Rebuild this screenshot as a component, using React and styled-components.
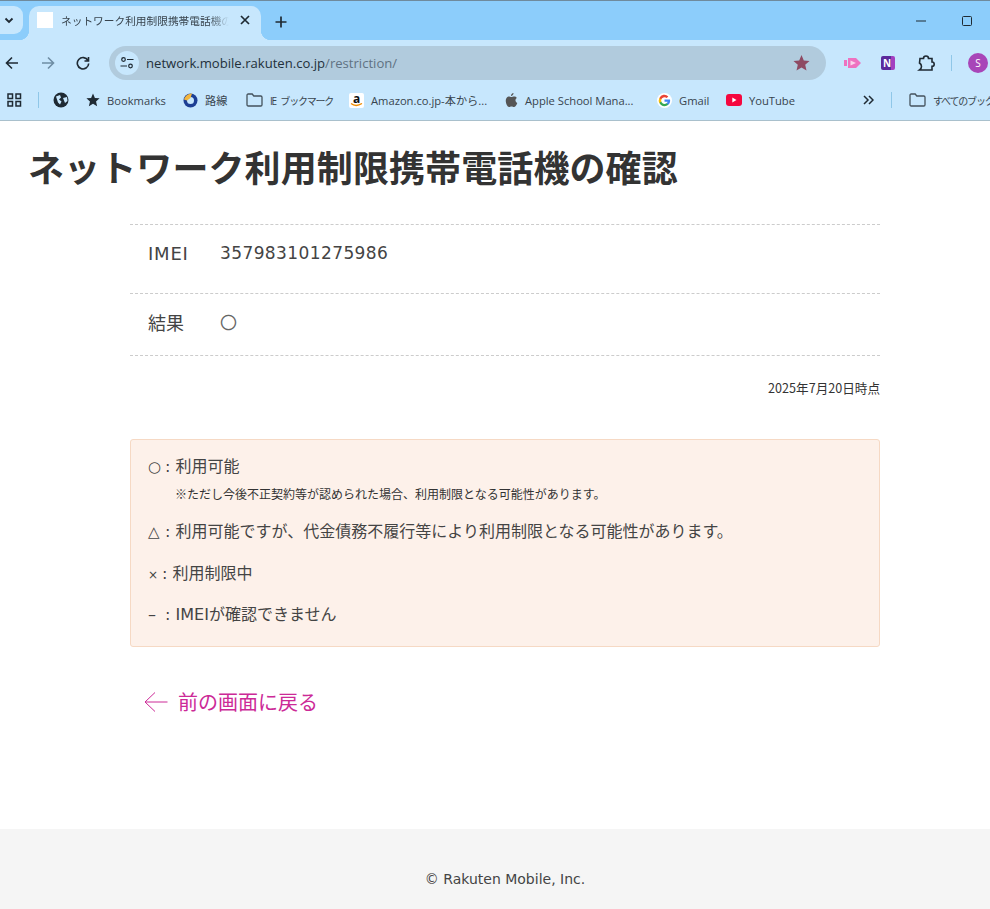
import { createGlobalStyle, styled } from 'styled-components';

const Global = createGlobalStyle`
    html, body {
        margin: 0;
        padding: 0;
        background: #fff;
    }
    body {
        font-family: "DejaVu Sans", "Noto Sans CJK JP", sans-serif;
        color: #333;
    }
`;

const Bookmark = ({ icon, label, $left, $width, $narrow }) => (
    <BookmarkItem $left={$left}>
        {icon}
        <BookmarkLabel $width={$width} $narrow={$narrow}>{label}</BookmarkLabel>
    </BookmarkItem>
);

const FolderIcon = () => (
    <svg width="17" height="14" viewBox="0 0 17 14" fill="none" stroke="#44525c" strokeWidth="1.3">
        <path d="M1 2.2C1 1.5 1.5 1 2.2 1h4l1.6 2h7c.7 0 1.2.5 1.2 1.2v7.6c0 .7-.5 1.2-1.2 1.2H2.200C1.500 13 1 12.500 1 11.800z" />
    </svg>
);

const App = () => {
    return (
        <Page>
            <Global />
            <Browser>
                <TabStrip>
                    <TabMenu>
                        <svg width="10" height="7" viewBox="0 0 10 7" fill="none" stroke="#1f2a33" strokeWidth="1.8">
                            <path d="M1.500 1.500 5 5l3.500-3.500" />
                        </svg>
                    </TabMenu>
                    <Tab>
                        <Favicon />
                        <TabTitle>ネットワーク利用制限携帯電話機の確認</TabTitle>
                        <svg width="10" height="10" viewBox="0 0 10 10" stroke="#1f2a33" strokeWidth="1.700">
                            <path d="M1 1l8 8M9 1 1 9" />
                        </svg>
                    </Tab>
                    <NewTab>
                        <svg width="12" height="12" viewBox="0 0 12 12" stroke="#1f2a33" strokeWidth="1.700">
                            <path d="M6 .5v11M.5 6h11" />
                        </svg>
                    </NewTab>
                    <WindowControls>
                        <svg width="10" height="2" viewBox="0 0 10 2" stroke="#1f2a33">
                            <path d="M0 1h10" />
                        </svg>
                        <svg width="10" height="10" viewBox="0 0 10 10" fill="none" stroke="#1f2a33">
                            <rect x=".5" y=".5" width="9" height="9" rx="1" />
                        </svg>
                    </WindowControls>
                </TabStrip>

                <Toolbar>
                    <NavIcons>
                        <svg width="14" height="14" viewBox="0 0 14 14" fill="none" stroke="#1f2a33" strokeWidth="1.600">
                            <path d="M13 7H1.500M7 1.500 1.500 7 7 12.500" />
                        </svg>
                        <svg width="14" height="14" viewBox="0 0 14 14" fill="none" stroke="#6f8ea4" strokeWidth="1.600">
                            <path d="M1 7h11.500M7 1.500 12.500 7 7 12.500" />
                        </svg>
                        <svg width="14" height="14" viewBox="0 0 14 14" fill="none" stroke="#1f2a33" strokeWidth="1.600">
                            <path d="M12 4.500A5.700 5.700 0 1 0 12.700 7.500M12.500 1v4h-4" />
                        </svg>
                    </NavIcons>
                    <Omnibox>
                        <SiteBadge>
                            <svg width="14" height="12" viewBox="0 0 14 12" fill="none" stroke="#1f2a33" strokeWidth="1.200">
                                <circle cx="3.500" cy="2.500" r="1.800" />
                                <path d="M7 2.500h6.500M.5 9h6.500" />
                                <circle cx="10.500" cy="9" r="1.800" />
                            </svg>
                        </SiteBadge>
                        <Url>
                            network.mobile.rakuten.co.jp<UrlPath>/restriction/</UrlPath>
                        </Url>
                        <svg width="17" height="16" viewBox="0 0 17 16" fill="#8e4a63">
                            <path d="M8.500 0l2.300 5.500 5.700.5-4.300 3.800 1.300 5.700-5-3-5 3 1.300-5.700L.5 6l5.700-.5z" />
                        </svg>
                    </Omnibox>
                    <Extensions>
                        <svg width="17" height="12" viewBox="0 0 17 12" fill="#ee72c0">
                            <path d="M0 3h3v6H0zM4 1h8l5 5-5 5H4z" />
                            <path d="M6.500 3.500v5L12 6z" fill="#fbd3ec" />
                        </svg>
                        <OneNote>N</OneNote>
                        <svg width="18" height="18" viewBox="0 0 18 18" fill="none" stroke="#1f2a33" strokeWidth="1.600">
                            <path d="M3 4.500h3.500a2.500 2.500 0 0 1 5 0H15v3.500a2.200 2.200 0 0 1 0 4.400V16H2.500c1.500-1 2-2 2-3.500s-.5-2.500-2-3.500z" />
                        </svg>
                        <Divider $height={16} $left={-4} />
                        <Avatar>S</Avatar>
                    </Extensions>
                </Toolbar>

                <BookmarkBar>
                    <svg width="15" height="14" viewBox="0 0 15 14" fill="none" stroke="#1f2a33" strokeWidth="1.500">
                        <rect x="1" y="1" width="4.500" height="4.500" />
                        <rect x="9" y="1" width="4.500" height="4.500" />
                        <rect x="1" y="8.500" width="4.500" height="4.500" />
                        <rect x="9" y="8.500" width="4.500" height="4.500" />
                    </svg>
                    <Divider $height={16} $left={16} />
                    <GlobeSlot>
                        <svg width="16" height="16" viewBox="0 0 16 16">
                            <circle cx="8" cy="8" r="7.500" fill="#1f2a33" />
                            <path d="M3 4.500 7 3l1 2.500-2 2 2.500 2-1.500 3-2-2zM10 6l4-1 .5 4-2.500 2z" fill="#c7e7fd" />
                        </svg>
                    </GlobeSlot>
                    <Bookmark
                        $left={17}
                        $width={59}
                        label="Bookmarks"
                        icon={
                            <svg width="14" height="14" viewBox="0 0 17 16" fill="#1f2a33">
                                <path d="M8.500 0l2.300 5.500 5.700.5-4.300 3.800 1.300 5.700-5-3-5 3 1.300-5.700L.5 6l5.700-.5z" />
                            </svg>
                        }
                    />
                    <Bookmark
                        $left={17}
                        $width={24}
                        label="路線"
                        icon={
                            <svg width="15" height="15" viewBox="0 0 15 15">
                                <circle cx="7.500" cy="7.500" r="7" fill="#1d3f94" />
                                <circle cx="7.500" cy="7.500" r="3.500" fill="#c7e7fd" />
                                <path d="M1 6.500C2 2.500 6 .5 9 .5L7.500 5 4 7.500z" fill="#f3b63e" />
                            </svg>
                        }
                    />
                    <Bookmark $left={17} $width={63} $narrow label="IE ブックマーク" icon={<FolderIcon />} />
                    <Bookmark
                        $left={16}
                        $width={115}
                        label="Amazon.co.jp-本から..."
                        icon={
                            <AmazonIcon>
                                a
                                <svg width="13" height="4" viewBox="0 0 13 4" fill="none" stroke="#f08c00" strokeWidth="1.300">
                                    <path d="M1 .5c3 2.500 7 2.500 11 0" />
                                </svg>
                            </AmazonIcon>
                        }
                    />
                    <Bookmark
                        $left={19}
                        $width={112}
                        label="Apple School Mana..."
                        icon={
                            <svg width="13" height="14" viewBox="0 0 12 14" fill="#555">
                                <path d="M8 0c.2 1.500-1 3-2.500 3C5.300 1.500 6.500.2 8 0zM1 5c1.500-2 3.500-1.500 4.500-1s2-1 4-.5c1 .3 1.500 1 1.800 1.500-2 1.200-1.700 4 .5 5-.7 2-2 4-3.300 4-1 0-1.500-.6-2.500-.6s-1.500.6-2.500.6C1.500 14-1 8 1 5z" />
                            </svg>
                        }
                    />
                    <Bookmark
                        $left={20}
                        $width={30}
                        label="Gmail"
                        icon={
                            <svg width="15" height="15" viewBox="0 0 24 24">
                                <circle cx="12" cy="12" r="12" fill="#fff" />
                                <path d="M21 12.200c0-.7-.1-1.300-.2-1.900H12v3.500h5a4.300 4.300 0 0 1-1.900 2.800v2.300h3C20 17.200 21 14.900 21 12.200z" fill="#4285f4" />
                                <path d="M12 21c2.500 0 4.500-.8 6.100-2.200l-3-2.300c-.8.600-1.900.9-3.100.9-2.400 0-4.400-1.600-5.100-3.800H3.800v2.400A9 9 0 0 0 12 21z" fill="#34a853" />
                                <path d="M6.900 13.600a5.400 5.400 0 0 1 0-3.400V7.800H3.800a9 9 0 0 0 0 8.200z" fill="#fbbc05" />
                                <path d="M12 6.600c1.300 0 2.500.5 3.500 1.400l2.600-2.600A9 9 0 0 0 3.800 7.800l3.100 2.400C7.600 8.100 9.600 6.600 12 6.600z" fill="#ea4335" />
                            </svg>
                        }
                    />
                    <Bookmark
                        $left={17}
                        $width={45}
                        label="YouTube"
                        icon={
                            <svg width="16" height="12" viewBox="0 0 16 12">
                                <rect width="16" height="12" rx="3" fill="#f5073e" />
                                <path d="M6.300 3.500v5L10.500 6z" fill="#fff" />
                            </svg>
                        }
                    />
                    <Overflow>
                        <svg width="11" height="10" viewBox="0 0 11 10" fill="none" stroke="#1f2a33" strokeWidth="1.500">
                            <path d="M1 1l4 4-4 4M6 1l4 4-4 4" />
                        </svg>
                    </Overflow>
                    <Divider $height={16} $left={17} />
                    <Bookmark $left={17} $width={70} $narrow label="すべてのブックマーク" icon={<FolderIcon />} />
                </BookmarkBar>
            </Browser>

            <Main>
                <Title>ネットワーク利用制限携帯電話機の確認</Title>
                <Content>
                    <ResultRow $height={69} $shift={12}>
                        <RowLabel $spaced>IMEI</RowLabel>
                        <RowValue>357983101275986</RowValue>
                    </ResultRow>
                    <ResultRow $height={62} $shift={6}>
                        <RowLabel>結果</RowLabel>
                        <RowValue $thin>〇</RowValue>
                    </ResultRow>
                    <Timestamp>2025年7月20日時点</Timestamp>

                    <Legend>
                        <LegendLine $top={0}><Mark $width={12} $size={15}>○</Mark> : 利用可能</LegendLine>
                        <LegendNote>※ただし今後不正契約等が認められた場合、利用制限となる可能性があります。</LegendNote>
                        <LegendLine $top={18}><Mark $width={12} $size={15}>△</Mark> : 利用可能ですが、代金債務不履行等により利用制限となる可能性があります。</LegendLine>
                        <LegendLine $top={18}><Mark $width={9} $size={12}>×</Mark> : 利用制限中</LegendLine>
                        <LegendLine $top={17}><Mark $width={12} $size={16}>–</Mark> : IMEIが確認できません</LegendLine>
                    </Legend>

                    <BackLink href="#">
                        <svg width="24" height="20" viewBox="0 0 24 20" fill="none" stroke="#cc2a97" strokeWidth="1">
                            <path d="M23.500 10H1M11 .5 1 10l10 9.500" />
                        </svg>
                        前の画面に戻る
                    </BackLink>
                </Content>
            </Main>

            <Footer>© Rakuten Mobile, Inc.</Footer>
        </Page>
    );
};

const Page = styled.div`
    width: 990px;
    height: 909px;
    overflow: hidden;
    display: flex;
    flex-direction: column;
`;

const Browser = styled.header`
    flex: none;
    font-family: "Open Sans", "Noto Sans CJK JP", sans-serif;
    background: #c7e7fd;
    border-bottom: 1px solid #a9c0cc;
`;

const TabStrip = styled.div`
    height: 39px;
    border-top: 1px solid #6f8a9c;
    background: #8ccdfb;
    display: flex;
    align-items: flex-end;
`;

const TabMenu = styled.div`
    width: 23px;
    height: 28px;
    margin-bottom: 6px;
    border-radius: 0 9px 9px 0;
    background: #c7e7fd;
    display: flex;
    align-items: center;
    justify-content: center;
    svg {
        margin-left: -6px;
    }
`;

const Tab = styled.div`
    position: relative;
    width: 232px;
    height: 34px;
    margin-left: 6px;
    padding: 0 11px 6px 8px;
    box-sizing: border-box;
    border-radius: 10px 10px 0 0;
    background: #c7e7fd;
    display: flex;
    align-items: center;
    svg {
        flex: none;
    }
    &::before,
    &::after {
        content: "";
        position: absolute;
        bottom: 0;
        width: 10px;
        height: 10px;
    }
    &::before {
        left: -10px;
        background: radial-gradient(circle at 0 0, transparent 10px, #c7e7fd 10.500px);
    }
    &::after {
        right: -10px;
        background: radial-gradient(circle at 100% 0, transparent 10px, #c7e7fd 10.500px);
    }
`;

const Favicon = styled.div`
    width: 16px;
    height: 16px;
    flex: none;
    background: #fff;
`;

const TabTitle = styled.div`
    width: 170px;
    margin: 0 11px 0 8px;
    font-size: 10.700px;
    color: #38444d;
    white-space: nowrap;
    overflow: hidden;
    mask-image: linear-gradient(to right, #000 88%, transparent);
`;

const NewTab = styled.div`
    margin: 0 0 12px 14px;
    height: 12px;
    display: flex;
`;

const WindowControls = styled.div`
    margin-left: auto;
    padding: 0 18px 0 0;
    height: 34px;
    width: 56px;
    display: flex;
    align-items: center;
    justify-content: space-between;
    margin-bottom: 2px;
`;

const Toolbar = styled.div`
    height: 44px;
    padding-top: 2px;
    box-sizing: border-box;
    display: flex;
    align-items: center;
`;

const NavIcons = styled.div`
    width: 109px;
    padding: 0 19px 0 5px;
    box-sizing: border-box;
    display: flex;
    justify-content: space-between;
`;

const Omnibox = styled.div`
    width: 717px;
    height: 34px;
    padding: 0 16px 0 6px;
    box-sizing: border-box;
    border-radius: 17px;
    background: #b1cbdd;
    display: flex;
    align-items: center;
`;

const SiteBadge = styled.div`
    width: 24px;
    height: 24px;
    flex: none;
    border-radius: 50%;
    background: #c7e7fd;
    display: flex;
    align-items: center;
    justify-content: center;
`;

const Url = styled.div`
    flex: 1;
    margin-left: 7px;
    font-size: 13.100px;
    color: #22303a;
`;

const UrlPath = styled.span`
    color: #5f7282;
`;

const Extensions = styled.div`
    flex: 1;
    padding-left: 18px;
    display: flex;
    align-items: center;
    gap: 20px;
    overflow: hidden;
    svg {
        flex: none;
    }
`;

const OneNote = styled.div`
    width: 14px;
    height: 14px;
    flex: none;
    margin-right: 2px;
    border-radius: 2px;
    background: linear-gradient(90deg, #5b2a9b 75%, #a33fc0 75%);
    color: #fff;
    font-size: 10px;
    font-weight: 700;
    line-height: 14px;
    text-indent: 2px;
`;

const Divider = styled.div`
    width: 1px;
    flex: none;
    height: ${(p) => p.$height}px;
    margin-left: ${(p) => p.$left || 0}px;
    background: #8fc7e8;
`;

const Avatar = styled.div`
    width: 20px;
    height: 20px;
    flex: none;
    margin-left: -4px;
    border-radius: 50%;
    background: #a846b8;
    color: #fff;
    font-size: 10px;
    line-height: 20px;
    text-align: center;
`;

const BookmarkBar = styled.nav`
    height: 36px;
    padding: 0 0 4px 7px;
    box-sizing: border-box;
    display: flex;
    align-items: center;
    overflow: hidden;
    svg {
        flex: none;
    }
`;

const GlobeSlot = styled.div`
    margin-left: 14px;
    display: flex;
`;

const BookmarkItem = styled.div`
    flex: none;
    margin-left: ${(p) => p.$left}px;
    display: flex;
    align-items: center;
    gap: 7px;
`;

const BookmarkLabel = styled.span`
    width: ${(p) => p.$width}px;
    font-size: ${(p) => (p.$narrow ? 10 : 11.200)}px;
    letter-spacing: ${(p) => (p.$narrow ? -1.200 : 0)}px;
    word-spacing: ${(p) => (p.$narrow ? 3 : 0)}px;
    color: #38444d;
    white-space: nowrap;
`;

const AmazonIcon = styled.div`
    width: 15px;
    height: 15px;
    border-radius: 2px;
    background: #fff;
    color: #111;
    font-size: 12px;
    font-weight: 700;
    line-height: 11px;
    text-align: center;
    overflow: hidden;
    svg {
        display: block;
        margin: -1px auto 0;
    }
`;

const Overflow = styled.div`
    margin-left: 69px;
    display: flex;
`;

const Main = styled.main`
    flex: 1;
    padding: 0 110px 0 28px;
`;

const Title = styled.h1`
    margin: 19px 0 0;
    font-family: "Noto Sans CJK JP", sans-serif;
    font-size: 36px;
    line-height: 52px;
    letter-spacing: 0.1px;
    font-weight: 700;
    color: #333;
    white-space: nowrap;
`;

const Content = styled.div`
    width: 750px;
    margin: 32px 0 0 102px;
    border-top: 1px dashed #ccc;
`;

const ResultRow = styled.div`
    height: ${(p) => p.$height}px;
    box-sizing: border-box;
    padding: 0 0 ${(p) => p.$shift}px 18px;
    border-bottom: 1px dashed #ccc;
    display: flex;
    align-items: center;
`;

const RowLabel = styled.div`
    width: 72px;
    font-size: 18px;
    letter-spacing: ${(p) => (p.$spaced ? 0.8 : 0)}px;
    color: #444;
`;

const RowValue = styled.div`
    font-size: 17px;
    letter-spacing: 0.4px;
    color: ${(p) => (p.$thin ? '#666' : '#444')};
`;

const Timestamp = styled.div`
    margin-top: 23px;
    font-family: "Noto Sans CJK JP", sans-serif;
    font-size: 12.600px;
    line-height: 18px;
    text-align: right;
    color: #333;
`;

const Legend = styled.section`
    margin-top: 42px;
    height: 208px;
    box-sizing: border-box;
    padding: 15px 17px 0;
    border: 1px solid #f6d9c4;
    border-radius: 3px;
    background: #fdf1ea;
`;

const LegendLine = styled.p`
    margin: ${(p) => p.$top}px 0 0;
    font-size: 16px;
    line-height: 24px;
    color: #444;
    white-space: nowrap;
`;

const Mark = styled.span`
    display: inline-block;
    width: ${(p) => p.$width}px;
    font-size: ${(p) => p.$size}px;
    line-height: 1;
`;

const LegendNote = styled.p`
    margin: 6px 0 0 27px;
    font-family: "Noto Sans CJK JP", sans-serif;
    font-size: 12px;
    line-height: 17px;
    color: #333;
`;

const BackLink = styled.a`
    margin: 41px 0 0 14px;
    display: flex;
    align-items: center;
    gap: 10px;
    font-family: "Noto Sans CJK JP", sans-serif;
    font-size: 20px;
    line-height: 28px;
    color: #cc2a97;
    text-decoration: none;
`;

const Footer = styled.footer`
    height: 80px;
    flex: none;
    background: #f5f5f5;
    display: flex;
    align-items: center;
    justify-content: center;
    padding: 20px 0 0 20px;
    box-sizing: border-box;
    font-size: 14px;
    color: #444;
`;

export default App;
